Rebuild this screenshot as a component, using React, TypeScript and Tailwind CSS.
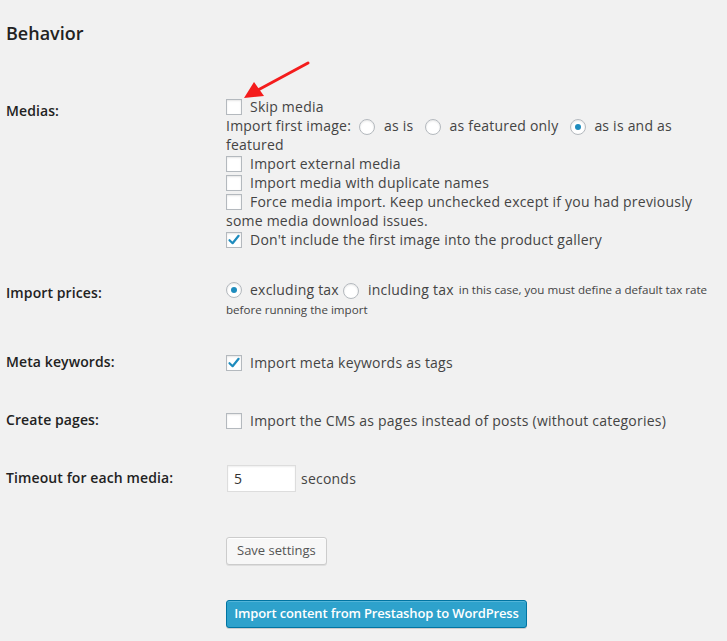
import React from 'react'

function Checkbox({ checked = false }: { checked?: boolean }) {
  return (
    <span className="relative inline-block w-4 h-4 shrink-0 border border-[#b4b9be] bg-white shadow-[inset_0_1px_2px_rgba(0,0,0,0.1)] align-middle mr-2">
      {checked && (
        <svg className="absolute -left-px -top-px" width="16" height="16" viewBox="0 0 16 16">
          <path d="M3.5 8.2 L6.6 11.2 L12.6 3.8" fill="none" stroke="#1e8cbe" strokeWidth="2.2" strokeLinecap="round" strokeLinejoin="round" />
        </svg>
      )}
    </span>
  )
}

function Radio({ checked = false }: { checked?: boolean }) {
  return (
    <span className="relative inline-flex items-center justify-center w-4 h-4 shrink-0 rounded-full border border-[#b4b9be] bg-white shadow-[inset_0_1px_2px_rgba(0,0,0,0.1)] align-middle">
      {checked && <span className="w-[6px] h-[6px] rounded-full bg-[#1e8cbe]" />}
    </span>
  )
}

function Label({ children }: { children: React.ReactNode }) {
  return (
    <div className="w-[220px] shrink-0 pt-[20px] text-[14px] leading-[18px] font-semibold text-[#222] tracking-[0.1px]">
      {children}
    </div>
  )
}

function CheckLine({ checked, children }: { checked?: boolean; children: React.ReactNode }) {
  return (
    <div className="flex items-center h-[19px] whitespace-nowrap">
      <Checkbox checked={checked} />
      <span>{children}</span>
    </div>
  )
}

export default function App() {
  return (
    <div
      className="relative min-h-screen bg-[#f1f1f1] pl-[6px] pt-[21px] text-[14px] text-[#444] tracking-[0.22px]"
      style={{ fontFamily: '"Open Sans", "Liberation Sans", sans-serif' }}
    >
      <h3 className="text-[18px] leading-[24px] font-semibold text-[#222] tracking-normal">Behavior</h3>

      <div className="mt-[37px]">
        {/* Medias */}
        <div className="flex pb-[15px]">
          <Label>Medias:</Label>
          <div className="pt-[15px] leading-[19px]">
            <CheckLine>Skip media</CheckLine>
            <div className="flex items-center h-[19px] whitespace-nowrap">
              <span>Import first image:</span>
              <span className="ml-[8px]"><Radio /></span>
              <span className="ml-[9px]">as is</span>
              <span className="ml-[12px]"><Radio /></span>
              <span className="ml-[8px]">as featured only</span>
              <span className="ml-[12px]"><Radio checked /></span>
              <span className="ml-[8px]">as is and as</span>
            </div>
            <div className="h-[19px]">featured</div>
            <CheckLine>Import external media</CheckLine>
            <CheckLine>Import media with duplicate names</CheckLine>
            <CheckLine>Force media import. Keep unchecked except if you had previously</CheckLine>
            <div className="h-[19px] whitespace-nowrap">some media download issues.</div>
            <CheckLine checked>Don't include the first image into the product gallery</CheckLine>
          </div>
        </div>

        {/* Import prices */}
        <div className="flex pb-[12px]">
          <Label>Import prices:</Label>
          <div className="pt-[16px]">
            <div className="flex items-center h-[19px] whitespace-nowrap">
              <Radio checked />
              <span className="ml-[8px]">excluding tax</span>
              <span className="ml-[4px]"><Radio /></span>
              <span className="ml-[9px]">including tax</span>
              <span className="ml-[5px] text-[11.6px] tracking-normal">in this case, you must define a default tax rate</span>
            </div>
            <div className="text-[11.6px] leading-[22px] tracking-normal">before running the import</div>
          </div>
        </div>

        {/* Meta keywords */}
        <div className="flex pb-[19px]">
          <Label>Meta keywords:</Label>
          <div className="pt-[20px]">
            <CheckLine checked>Import meta keywords as tags</CheckLine>
          </div>
        </div>

        {/* Create pages */}
        <div className="flex pb-[19px]">
          <Label>Create pages:</Label>
          <div className="pt-[20px]">
            <CheckLine>Import the CMS as pages instead of posts (without categories)</CheckLine>
          </div>
        </div>

        {/* Timeout */}
        <div className="flex">
          <Label>Timeout for each media:</Label>
          <div className="pt-[16px] flex items-center">
            <input
              type="text"
              defaultValue="5"
              className="ml-[1px] w-[69px] h-[27px] px-[6px] bg-white border border-[#ddd] shadow-[inset_0_1px_2px_rgba(0,0,0,0.07)] text-[14px] text-[#333] outline-none"
            />
            <span className="ml-[5px]">seconds</span>
          </div>
        </div>
      </div>

      <div className="ml-[220px] mt-[45px]">
        <button
          type="button"
          className="h-[28px] px-[10px] rounded-[3px] border border-[#ccc] bg-[#f7f7f7] shadow-[inset_0_1px_0_#fff,0_1px_0_rgba(0,0,0,0.08)] text-[13px] text-[#555] tracking-normal"
        >
          Save settings
        </button>
      </div>

      <div className="ml-[220px] mt-[35px] pb-[13px]">
        <button
          type="button"
          className="h-[28px] w-[301px] rounded-[3px] border border-[#0074a2] bg-[#2ea2cc] shadow-[inset_0_1px_0_rgba(120,200,230,0.5),0_1px_0_rgba(0,0,0,0.15)] text-[13px] font-semibold text-white whitespace-nowrap tracking-[-0.15px]"
        >
          Import content from Prestashop to WordPress
        </button>
      </div>

      {/* red annotation arrow */}
      <svg className="absolute left-0 top-0 pointer-events-none" width="727" height="120" viewBox="0 0 727 120">
        <line x1="308" y1="63" x2="258" y2="90" stroke="#f41c1c" strokeWidth="3" strokeLinecap="round" />
        <polygon points="244,98 254,82 264,96" fill="#f41c1c" />
      </svg>
    </div>
  )
}
